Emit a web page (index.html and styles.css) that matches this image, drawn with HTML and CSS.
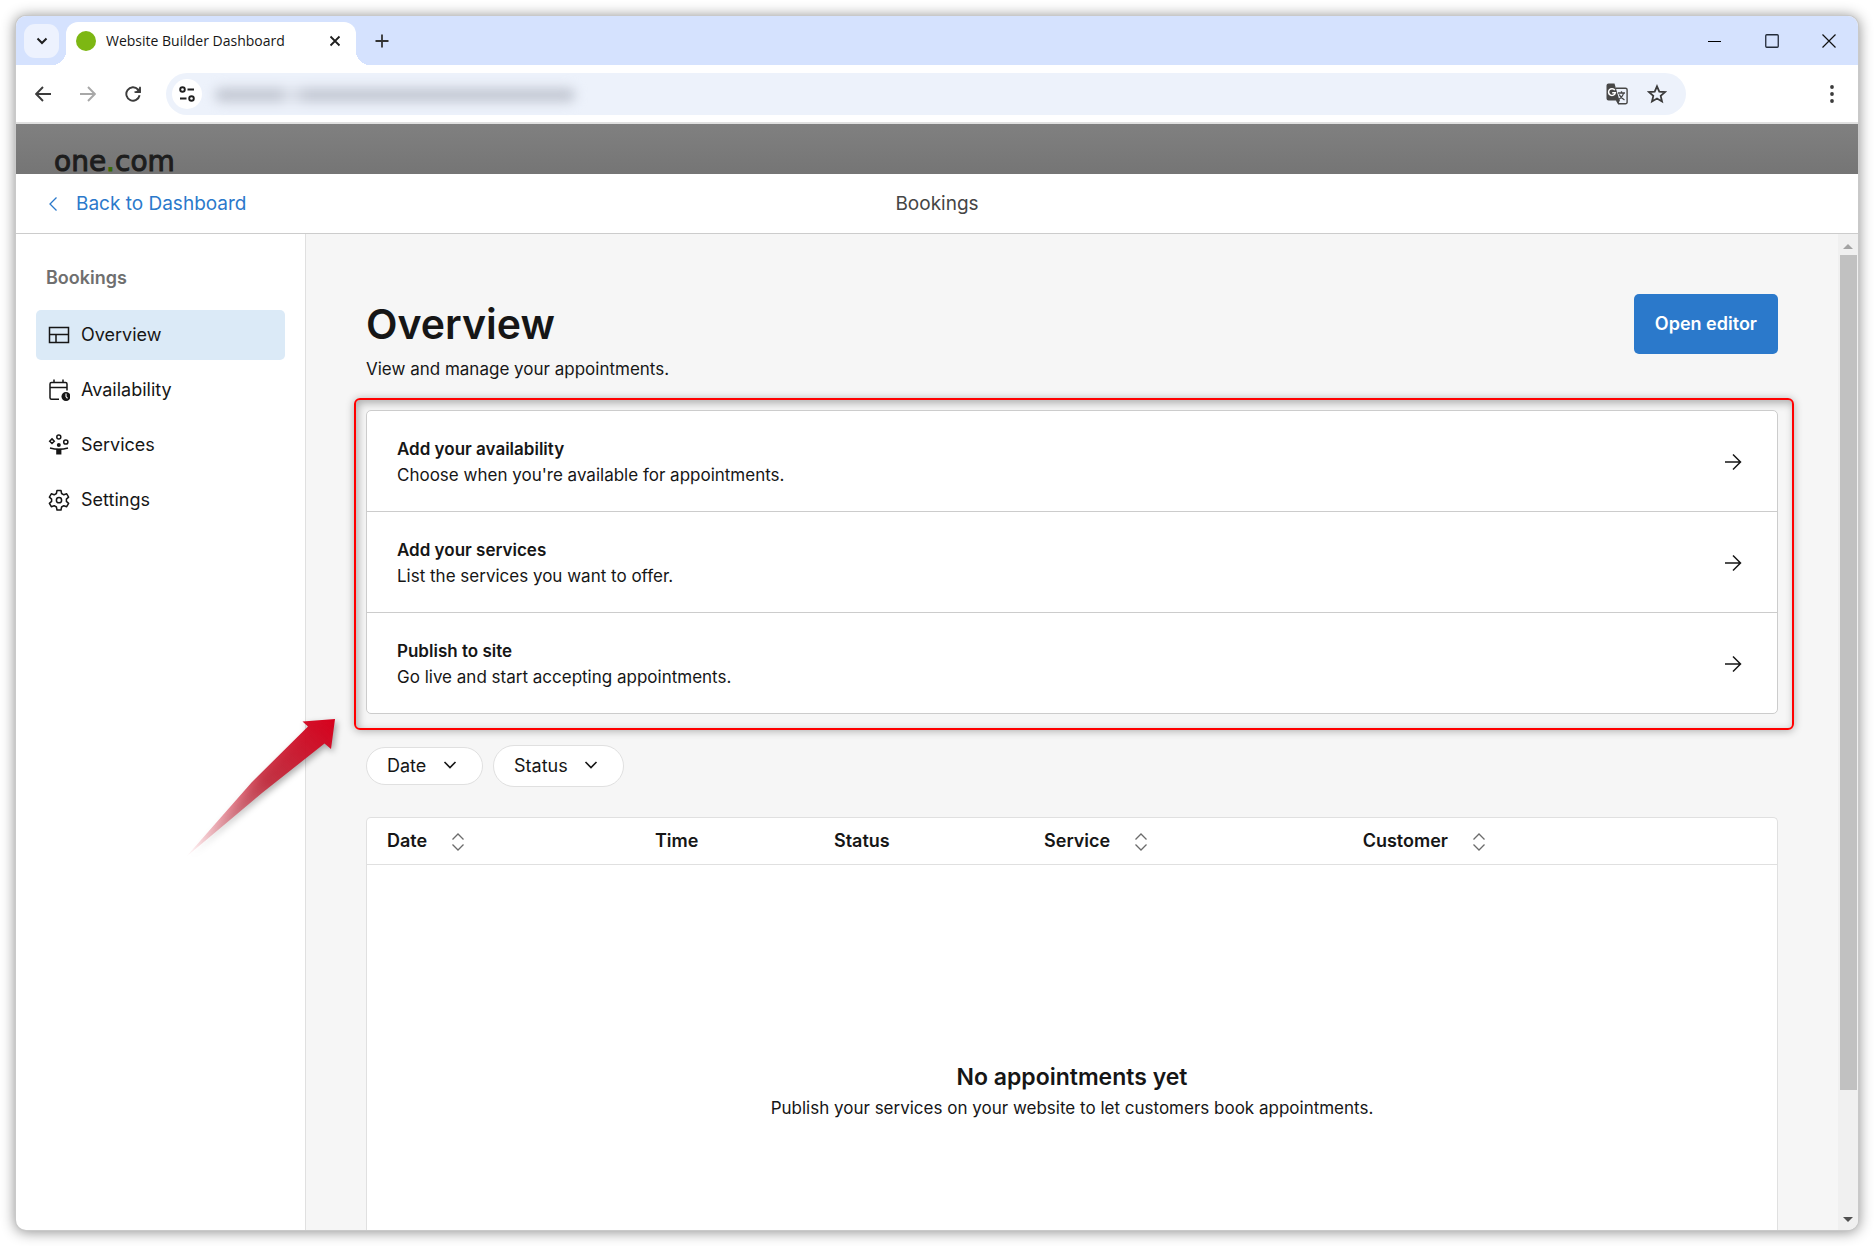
FILE: index.html
```html
<!DOCTYPE html>
<html lang="en">
<head>
    <meta charset="UTF-8">
    <meta name="viewport" content="width=device-width, initial-scale=1.0">
    <title>Website Builder Dashboard</title>
    <link rel="stylesheet" href="styles.css">
</head>
<body>

    <div class="window">
        <div class="tab-strip">
            <button type="button" class="tab-search" aria-label="Search tabs">
                <svg width="12" height="8" viewBox="0 0 12 8"><path d="M1.5 1.5 6 6l4.500-4.500" fill="none" stroke="#1f1f1f" stroke-width="2"/></svg>
            </button>
            <div class="tab">
                <span class="favicon"></span>
                <span class="tab-title">Website Builder Dashboard</span>
                <button type="button" class="plain" aria-label="Close tab">
                    <svg width="12" height="12" viewBox="0 0 12 12"><path d="M1.500 1.500l9 9M10.500 1.500l-9 9" stroke="#1f1f1f" stroke-width="1.800"/></svg>
                </button>
            </div>
            <button type="button" class="plain new-tab" aria-label="New tab">
                <svg width="14" height="14" viewBox="0 0 14 14"><path d="M7 .5v13M.5 7h13" stroke="#333" stroke-width="1.800"/></svg>
            </button>
            <div class="window-controls">
                <button type="button" class="plain" aria-label="Minimize">
                    <svg width="14" height="14" viewBox="0 0 14 14"><path d="M0 7.500h13" stroke="#000"/></svg>
                </button>
                <button type="button" class="plain" aria-label="Maximize">
                    <svg width="14" height="14" viewBox="0 0 14 14"><rect x=".75" y=".75" width="12.500" height="12.500" rx="1" fill="none" stroke="#222a38" stroke-width="1.300"/></svg>
                </button>
                <button type="button" class="plain" aria-label="Close">
                    <svg width="14" height="14" viewBox="0 0 14 14"><path d="M.5.5l13 13M13.500.5l-13 13" stroke="#111" stroke-width="1.200"/></svg>
                </button>
            </div>
        </div>

        <div class="toolbar">
            <button type="button" class="plain" aria-label="Back">
                <svg width="16" height="16" viewBox="0 0 16 16"><path d="M16 8H1.500M8 1 1.200 8 8 15" fill="none" stroke="#3c3c3c" stroke-width="1.900"/></svg>
            </button>
            <button type="button" class="plain" aria-label="Forward">
                <svg width="16" height="16" viewBox="0 0 16 16"><path d="M0 8h14.500M8 1l6.800 7L8 15" fill="none" stroke="#a8a8a8" stroke-width="1.900"/></svg>
            </button>
            <button type="button" class="plain" aria-label="Reload">
                <svg width="16" height="16" viewBox="0 0 16 16"><path d="M14.600 9.300A6.700 6.700 0 1 1 13 3.500l1.800 2" fill="none" stroke="#3c3c3c" stroke-width="1.900"/><path d="M15.800.8v6.200H9.600z" fill="#3c3c3c"/><path d="M9.500 6h5.400V.8" fill="none" stroke="#3c3c3c" stroke-width="1.500"/></svg>
            </button>
            <div class="address">
                <button type="button" class="site-info" aria-label="Site information">
                    <svg width="16" height="16" viewBox="0 0 16 16" fill="none" stroke="#1f1f1f" stroke-width="1.900"><circle cx="3.500" cy="3.500" r="2.300"/><path d="M8.500 3.500H15M1 12.500h6.500"/><circle cx="12.500" cy="12.500" r="2.300"/></svg>
                </button>
                <div class="url">
                    <input type="text" class="url-input" aria-label="Address">
                    <span class="url-smudge"></span>
                </div>
                <button type="button" class="plain" aria-label="Translate">
                    <svg width="22" height="22" viewBox="0 0 22 22"><path d="M2.500.5h6l5 17H2.500a2 2 0 0 1-2-2v-13a2 2 0 0 1 2-2z" fill="#474747"/><path d="M10 5.200h9.500a1.600 1.600 0 0 1 1.600 1.600v12.400a1.600 1.600 0 0 1-1.600 1.600h-7l-1.800-3.400" fill="none" stroke="#474747" stroke-width="1.400"/><path d="m9.500 16.500 3 4.300 1.500-4z" fill="#474747"/><path d="M8.800 7.200A3.400 3.400 0 1 0 9.300 9.800H6.200" fill="none" stroke="#fff" stroke-width="1.500"/><path d="M12 10h7M15.500 8.300V10m2 0c-.5 3-2.500 5-5 6.500m.7-5c1 2.500 3 4 5.300 5.500" fill="none" stroke="#474747" stroke-width="1.300"/></svg>
                </button>
                <button type="button" class="plain" aria-label="Bookmark">
                    <svg width="20" height="20" viewBox="0 0 20 20"><path d="m10 2.300 2.300 5.300 5.700.5-4.300 3.800 1.300 5.600-5-3-5 3 1.300-5.600L2 8.100l5.700-.5z" fill="none" stroke="#3c3c3c" stroke-width="1.800"/></svg>
                </button>
            </div>
            <button type="button" class="plain menu" aria-label="Menu">
                <svg width="4" height="18" viewBox="0 0 4 18" fill="#3c3c3c"><circle cx="2" cy="2" r="1.900"/><circle cx="2" cy="9" r="1.900"/><circle cx="2" cy="16" r="1.900"/></svg>
            </button>
        </div>

        <div class="site-header">
            <span class="logo">one<span class="logo-dot">.</span>com</span>
        </div>

        <header class="title-bar">
            <a href="#" class="back-link">
                <svg width="10" height="16" viewBox="0 0 10 16"><path d="M8.500 1.500 2 8l6.500 6.500" fill="none" stroke="#2b79cb" stroke-width="1.300"/></svg>
                Back to Dashboard
            </a>
            <span class="title">Bookings</span>
        </header>

        <div class="app">
            <nav class="sidebar">
                <h2>Bookings</h2>
                <a href="#" class="nav-item active">
                    <svg width="22" height="22" viewBox="0 0 22 22" fill="none" stroke="#161616" stroke-width="1.500"><path d="M1.500 3.500h19v15h-19zM1.500 10.500h19M8 10.500v8"/></svg>
                    Overview
                </a>
                <a href="#" class="nav-item">
                    <svg width="22" height="22" viewBox="0 0 22 22"><path d="M11 20.200H3.500a1.500 1.500 0 0 1-1.500-1.500V5a1.500 1.500 0 0 1 1.500-1.500h14A1.500 1.500 0 0 1 19 5v6.500M2 8.500h17M6 .5v3M15 .5v3" fill="none" stroke="#161616" stroke-width="1.500"/><circle cx="18" cy="17.500" r="4.500" fill="#161616"/><path d="M18 14.500v3l1.500 1.800" fill="none" stroke="#fff" stroke-width="1.100"/></svg>
                    Availability
                </a>
                <a href="#" class="nav-item">
                    <svg width="22" height="22" viewBox="0 0 22 22" fill="none" stroke="#161616" stroke-width="1.500"><circle cx="10.800" cy="3" r="2"/><path d="m4 4.900 2.300 2.300L4 9.500 1.700 7.200z"/><circle cx="17.800" cy="8" r="2.100"/><circle cx="10.800" cy="11" r="2" fill="#161616" stroke="none"/><path d="M2 14c5.500 1.600 12.500 1.600 18 0"/><path d="M8.200 14.800h5.200v5.700H8.200z" fill="#161616" stroke="none"/></svg>
                    Services
                </a>
                <a href="#" class="nav-item">
                    <svg width="22" height="22" viewBox="0 0 22 22" fill="none" stroke="#161616" stroke-width="1.500" stroke-linejoin="round"><path d="M9 1.500h4l.6 3 2.200 1.300 2.900-1 1.900 3.300-2.200 2v2.300l2.200 2-1.900 3.300-2.900-1-2.200 1.300-.6 3H9l-.6-3-2.200-1.300-2.900 1-1.900-3.300 2.200-2v-2.300l-2.200-2 1.900-3.300 2.900 1 2.200-1.300z"/><circle cx="11" cy="11.200" r="2.600"/></svg>
                    Settings
                </a>
            </nav>

            <main class="content">
                <div class="page-head">
                    <div>
                        <h1>Overview</h1>
                        <p>View and manage your appointments.</p>
                    </div>
                    <button type="button" class="primary">Open editor</button>
                </div>

                <div class="highlight">
                    <div class="steps">
                        <a href="#" class="step">
                            <span><strong>Add your availability</strong>Choose when you're available for appointments.</span>
                            <svg width="18" height="18" viewBox="0 0 18 18"><path d="M1 9h15.500M9 1.500 16.500 9 9 16.500" fill="none" stroke="#161616" stroke-width="1.500"/></svg>
                        </a>
                        <a href="#" class="step">
                            <span><strong>Add your services</strong>List the services you want to offer.</span>
                            <svg width="18" height="18" viewBox="0 0 18 18"><path d="M1 9h15.500M9 1.500 16.500 9 9 16.500" fill="none" stroke="#161616" stroke-width="1.500"/></svg>
                        </a>
                        <a href="#" class="step">
                            <span><strong>Publish to site</strong>Go live and start accepting appointments.</span>
                            <svg width="18" height="18" viewBox="0 0 18 18"><path d="M1 9h15.500M9 1.500 16.500 9 9 16.500" fill="none" stroke="#161616" stroke-width="1.500"/></svg>
                        </a>
                    </div>
                    <svg class="pointer" width="170" height="160" viewBox="0 0 170 160">
                        <defs>
                            <linearGradient id="fade" x1="0" y1="1" x2="1" y2="0">
                                <stop offset="0" stop-color="#d0021b" stop-opacity="0"/>
                                <stop offset=".25" stop-color="#d01830" stop-opacity=".4"/>
                                <stop offset=".55" stop-color="#c41c30" stop-opacity=".85"/>
                                <stop offset="1" stop-color="#d6001c"/>
                            </linearGradient>
                        </defs>
                        <path d="M6 143 72 68 128 12.500l-5.500-5L155 5l-4 30-6.500-5.500L82 79z" fill="url(#fade)"/>
                    </svg>
                </div>

                <div class="filters">
                    <label class="filter">
                        <select aria-label="Date"><option>Date</option></select>
                        <svg width="14" height="8" viewBox="0 0 14 8"><path d="M1.500 1 7 6.500 12.500 1" fill="none" stroke="#161616" stroke-width="1.600"/></svg>
                    </label>
                    <label class="filter filter-tall">
                        <select aria-label="Status"><option>Status</option></select>
                        <svg width="14" height="8" viewBox="0 0 14 8"><path d="M1.500 1 7 6.500 12.500 1" fill="none" stroke="#161616" stroke-width="1.600"/></svg>
                    </label>
                </div>

                <div class="table-box">
                    <table>
                        <thead>
                            <tr>
                                <th class="col-date">Date <button type="button" class="plain sort" aria-label="Sort by date"><svg width="14" height="18" viewBox="0 0 14 18"><path d="M1.500 6.500 7 1l5.500 5.500M1.500 11.500 7 17l5.500-5.500" fill="none" stroke="#6b6b6b" stroke-width="1.300"/></svg></button></th>
                                <th class="col-time">Time</th>
                                <th class="col-status">Status</th>
                                <th class="col-service">Service <button type="button" class="plain sort" aria-label="Sort by service"><svg width="14" height="18" viewBox="0 0 14 18"><path d="M1.500 6.500 7 1l5.500 5.500M1.500 11.500 7 17l5.500-5.500" fill="none" stroke="#6b6b6b" stroke-width="1.300"/></svg></button></th>
                                <th>Customer <button type="button" class="plain sort" aria-label="Sort by customer"><svg width="14" height="18" viewBox="0 0 14 18"><path d="M1.500 6.500 7 1l5.500 5.500M1.500 11.500 7 17l5.500-5.500" fill="none" stroke="#6b6b6b" stroke-width="1.300"/></svg></button></th>
                            </tr>
                        </thead>
                    </table>
                    <div class="empty">
                        <h3>No appointments yet</h3>
                        <p>Publish your services on your website to let customers book appointments.</p>
                    </div>
                </div>
            </main>

            <div class="scrollbar">
                <span class="arrow-up"></span>
                <span class="thumb"></span>
                <span class="arrow-down"></span>
            </div>
        </div>
    </div>

</body>
</html>
```
FILE: styles.css
```css
* {
    box-sizing: border-box;
}

body {
    margin: 0;
    padding: 16px;
    height: 100vh;
    background-color: #ffffff;
    color: #161616;
    font-family: 'Inter', sans-serif;
    font-size: 18px;
    line-height: 26px;
}

h1, h2, h3, p {
    margin: 0;
}

a {
    color: inherit;
    text-decoration: none;
}

svg {
    display: block;
    flex: none;
}

button, input, select {
    font: inherit;
    color: inherit;
}

.plain {
    padding: 0;
    border: none;
    background: none;
    cursor: pointer;
}

.window {
    display: flex;
    flex-direction: column;
    height: 100%;
    border-radius: 10px;
    overflow: hidden;
    background-color: #ffffff;
    box-shadow: 0 0 0 1px #c9c9c9, 0 1px 14px 1px rgba(0, 0, 0, 0.45);
}

/* Browser tabs */
.tab-strip {
    display: flex;
    align-items: center;
    height: 49px;
    flex: none;
    padding: 0 22px 0 8px;
    background-color: #d5e2fe;
}

.tab-search {
    display: flex;
    align-items: center;
    justify-content: center;
    width: 35px;
    height: 34px;
    padding: 0;
    border: none;
    border-radius: 11px;
    background-color: #edf2fe;
}

.tab {
    position: relative;
    display: flex;
    align-items: center;
    align-self: flex-end;
    gap: 10px;
    width: 290px;
    height: 43px;
    margin-left: 7px;
    padding: 0 15px 6px 10px;
    border-radius: 12px 12px 0 0;
    background-color: #ffffff;
}

.tab::before, .tab::after {
    content: "";
    position: absolute;
    bottom: 0;
    width: 14px;
    height: 14px;
}

.tab::before {
    right: 100%;
    background: radial-gradient(circle at 0 0, transparent 14px, #ffffff 14px);
}

.tab::after {
    left: 100%;
    background: radial-gradient(circle at 100% 0, transparent 14px, #ffffff 14px);
}

.favicon {
    width: 20px;
    height: 20px;
    border-radius: 50%;
    background-color: #7db713;
}

.tab-title {
    flex: 1;
    font-family: 'Open Sans', sans-serif;
    font-size: 14px;
    white-space: nowrap;
}

.new-tab {
    margin-left: 19px;
}

.window-controls {
    display: flex;
    gap: 43px;
    margin-left: auto;
}

.toolbar {
    display: flex;
    align-items: center;
    gap: 29px;
    height: 59px;
    flex: none;
    padding: 0 24px 0 19px;
    border-bottom: 2px solid #e0e0e0;
}

.address {
    display: flex;
    align-items: center;
    gap: 19px;
    flex: 1;
    height: 42px;
    margin: 0 115px 0 -4px;
    padding: 0 19px 0 6px;
    border-radius: 21px;
    background-color: #edf2fb;
}

.site-info {
    display: flex;
    align-items: center;
    justify-content: center;
    width: 30px;
    height: 30px;
    margin-right: -10px;
    padding: 0;
    border: none;
    border-radius: 50%;
    background-color: #ffffff;
}

.url {
    position: relative;
    flex: 1;
}

.url-input {
    width: 100%;
    border: none;
    outline: none;
    background: none;
}

.url-smudge {
    position: absolute;
    top: 8px;
    left: 4px;
    width: 360px;
    height: 14px;
    border-radius: 6px;
    background: linear-gradient(to right, #c2c7d2 0 65px, #dbe0ea 72px 78px, #c2c7d2 92px);
    filter: blur(6px);
    pointer-events: none;
}

/* Dimmed page behind the panel */
.site-header {
    display: flex;
    align-items: flex-end;
    height: 50px;
    flex: none;
    padding: 0 38px;
    background: linear-gradient(#808080, #757575);
}

.logo {
    color: #1d1d1d;
    font-family: 'DejaVu Sans', sans-serif;
    font-size: 28px;
    line-height: 24px;
    -webkit-text-stroke: 1px;
}

.logo-dot {
    color: #3c6a05;
}

.title-bar {
    display: grid;
    grid-template-columns: 1fr auto 1fr;
    align-items: center;
    height: 60px;
    flex: none;
    padding: 0 32px;
    border-bottom: 1px solid #cccccc;
    background-color: #ffffff;
    font-size: 19px;
}

.back-link {
    display: flex;
    align-items: center;
    gap: 18px;
    color: #2b79cb;
}

.title {
    color: #454545;
}

.app {
    display: flex;
    flex: 1;
    min-height: 0;
}

.sidebar {
    display: flex;
    flex-direction: column;
    gap: 5px;
    width: 290px;
    flex: none;
    padding: 31px 20px;
    border-right: 1px solid #e0e0e0;
}

.sidebar h2 {
    margin-bottom: 14px;
    padding-left: 10px;
    color: #6f6f6f;
    font-size: 18px;
    font-weight: 600;
}

.nav-item {
    display: flex;
    align-items: center;
    gap: 11px;
    height: 50px;
    padding-left: 12px;
    border-radius: 5px;
}

.nav-item.active {
    background-color: #dbeaf7;
}

.content {
    display: flex;
    flex-direction: column;
    flex: 1;
    min-width: 0;
    padding: 60px 60px 0;
    background-color: #f6f6f6;
}

.page-head {
    display: flex;
    align-items: flex-start;
    justify-content: space-between;
}

.page-head p, .step, .empty p {
    font-size: 17px;
}

h1 {
    margin-bottom: 2px;
    font-size: 41px;
    font-weight: 600;
    line-height: 60px;
}

.primary {
    height: 60px;
    padding: 0 21px;
    border: none;
    border-radius: 5px;
    background-color: #2b79cb;
    color: #ffffff;
    font-weight: 600;
}

.highlight {
    position: relative;
    margin: 16px -16px 0 -12px;
    padding: 10px 14px 14px 10px;
    border: 2px solid #ff0000;
    border-radius: 6px;
    box-shadow: 0 1px 8px rgba(0, 0, 0, 0.3), inset 2px 3px 8px rgba(0, 0, 0, 0.3);
}

.steps {
    border: 1px solid #cccccc;
    border-radius: 5px;
    background-color: #ffffff;
}

.step {
    display: flex;
    align-items: center;
    justify-content: space-between;
    padding: 25px 35px 23px 30px;
}

.step + .step {
    border-top: 1px solid #cccccc;
}

.step strong {
    display: block;
    font-weight: 600;
}

.pointer {
    position: absolute;
    right: 100%;
    bottom: -146px;
    margin-right: 6px;
    filter: drop-shadow(2px 3px 3px rgba(0, 0, 0, 0.35));
}

.filters {
    display: flex;
    align-items: center;
    gap: 10px;
    margin-top: 15px;
}

.filter {
    position: relative;
    display: flex;
}

.filter select {
    appearance: none;
    height: 38px;
    padding: 0 55px 0 20px;
    border: 1px solid #e0e0e0;
    border-radius: 21px;
    background-color: #ffffff;
}

.filter-tall select {
    height: 42px;
}

.filter svg {
    position: absolute;
    top: calc(50% - 5px);
    right: 26px;
    pointer-events: none;
}

.table-box {
    display: flex;
    flex-direction: column;
    flex: 1;
    margin-top: 30px;
    border: 1px solid #e0e0e0;
    border-bottom: none;
    border-radius: 5px 5px 0 0;
    background-color: #ffffff;
}

table {
    width: 100%;
    border-collapse: collapse;
    table-layout: fixed;
}

th {
    height: 46px;
    padding: 0 20px;
    border-bottom: 1px solid #e0e0e0;
    text-align: left;
    font-weight: 600;
    white-space: nowrap;
}

.col-date {
    width: 19%;
}

.col-time {
    width: 12.7%;
}

.col-status {
    width: 14.9%;
}

.col-service {
    width: 22.6%;
}

.sort {
    margin-left: 19px;
    vertical-align: middle;
}

.empty {
    display: flex;
    flex-direction: column;
    gap: 4px;
    padding-top: 198px;
    text-align: center;
}

.empty h3 {
    font-size: 23px;
    font-weight: 600;
    line-height: 28px;
}

.scrollbar {
    display: flex;
    flex-direction: column;
    align-items: center;
    width: 20px;
    flex: none;
    padding: 10px 0 8px;
    background-color: #f0f0f0;
}

.arrow-up {
    border: 5px solid transparent;
    border-top: none;
    border-bottom-color: #a3a3a3;
}

.arrow-down {
    margin-top: auto;
    border: 5px solid transparent;
    border-bottom: none;
    border-top-color: #505050;
}

.thumb {
    width: 17px;
    height: 85.4%;
    margin-top: 6px;
    background-color: #c1c1c1;
}
```
